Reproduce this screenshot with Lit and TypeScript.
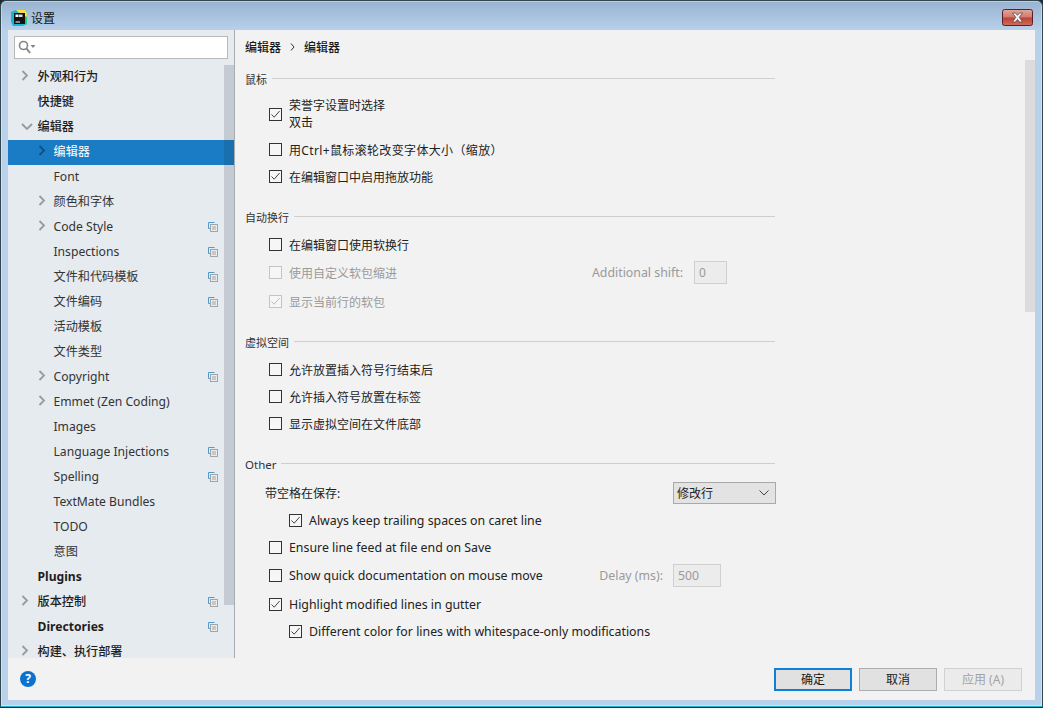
import { LitElement, html, css, svg, nothing } from "lit";
import { customElement } from "lit/decorators.js";

type Node = { t: string; lv: 0 | 1; chev?: "r" | "d"; copy?: boolean; sel?: boolean };
const tree: Node[] = [
  { t: "外观和行为", lv: 0, chev: "r" },
  { t: "快捷键", lv: 0 },
  { t: "编辑器", lv: 0, chev: "d" },
  { t: "编辑器", lv: 1, chev: "r", sel: true },
  { t: "Font", lv: 1 },
  { t: "颜色和字体", lv: 1, chev: "r" },
  { t: "Code Style", lv: 1, chev: "r", copy: true },
  { t: "Inspections", lv: 1, copy: true },
  { t: "文件和代码模板", lv: 1, copy: true },
  { t: "文件编码", lv: 1, copy: true },
  { t: "活动模板", lv: 1 },
  { t: "文件类型", lv: 1 },
  { t: "Copyright", lv: 1, chev: "r", copy: true },
  { t: "Emmet (Zen Coding)", lv: 1, chev: "r" },
  { t: "Images", lv: 1 },
  { t: "Language Injections", lv: 1, copy: true },
  { t: "Spelling", lv: 1, copy: true },
  { t: "TextMate Bundles", lv: 1 },
  { t: "TODO", lv: 1 },
  { t: "意图", lv: 1 },
  { t: "Plugins", lv: 0 },
  { t: "版本控制", lv: 0, chev: "r", copy: true },
  { t: "Directories", lv: 0, copy: true },
  { t: "构建、执行部署", lv: 0, chev: "r" },
];

const chevR = svg`<path d="M1.5 1 L6 5.5 L1.5 10" fill="none" stroke-width="1.8"/>`;
const chevD = svg`<path d="M1 2 L6 7 L11 2" fill="none" stroke-width="1.8"/>`;

@customElement("app-root")
export class AppRoot extends LitElement {
  static styles = css`
    :host {
      display: block; width: 1043px; height: 708px; overflow: hidden;
      font-family: "Noto Sans", "Noto Sans CJK SC", sans-serif; font-size: 12px; color: #1e1e1e;
      background: #1c2b33;
    }
    * { box-sizing: border-box; }
    .win {
      width: 1043px; height: 707px; border: 1px solid #33474f; border-bottom-color: #17b6c9; border-radius: 6px 6px 0 0;
      background: linear-gradient(#98b3d1 0, #b9d1ea 30px); display: flex; flex-direction: column; overflow: hidden;
      box-shadow: inset 0 0 0 1px rgba(255,255,255,.35);
    }
    .title { height: 29px; flex: none; display: flex; align-items: center; padding: 4px 9px 0 9px; gap: 3px; color: #111; font-size: 12px; }
    .title .name { flex: 1; }
    .close { width: 31px; height: 17px; display: block; }
    .client { width: 1027px; margin-left: 7px; height: 670px; flex: none; display: flex; flex-direction: column; background: #f2f2f2; position: relative; }
    .body { flex: 1; display: flex; min-height: 0; }
    .side { width: 227px; flex: none; background: #e6ebf0; border-right: 1px solid #a8acb0; display: flex; flex-direction: column; position: relative; overflow: hidden; }
    .search { margin: 6px; width: 214px; height: 23px; flex: none; background: #fff; border: 1px solid #b9b9b9; display: flex; align-items: center; padding-left: 3px; }
    .tree { flex: 1; overflow: hidden; font-size: 12.15px; }
    .row { height: 25px; padding-bottom: 4px; display: flex; align-items: center; position: relative; white-space: nowrap; color: #262626; }
    .row.en { padding-bottom: 3px; }
    .row.lv0 { padding-left: 29.5px; font-weight: 500; color: #1e1e1e; }
    .row.lv0.en { font-weight: 700; }
    .row.lv1 { padding-left: 45.5px; color: #333; }
    .row.sel { background: #1a7cc4; color: #fff; }
    .chev { position: absolute; top: 5px; stroke: #9a9a9a; }
    .lv0 .chev { left: 13px; width: 8px; height: 12px; }
    .lv1 .chev { left: 30px; width: 8px; height: 12px; }
    .chev.d { left: 13px; width: 12px; height: 10px; top: 7px; }
    .sel .chev { stroke: #0d4f85; }
    .copy { position: absolute; left: 200px; top: 7px; }
    .thumb { position: absolute; left: 216px; top: 35px; width: 10px; height: 540px; background: rgba(30, 50, 70, .17); }
    .main { flex: 1; position: relative; padding: 0 0 0 10px; overflow: hidden; min-width: 0; }
    .vbar { position: absolute; right: 0; top: 30px; width: 10px; height: 252px; background: #dcdcdc; }
    .crumb { height: 35px; padding-bottom: 2px; display: flex; align-items: center; font-weight: 500; font-size: 12px; color: #1a1a1a; gap: 8px; margin-bottom: 5px; }
    .crumb svg { margin: 0 1px; }
    .sec { display: flex; align-items: center; height: 18px; font-size: 11px; color: #333; gap: 5px; width: 530px; }
    .sec i { flex: 1; border-top: 1px solid #cfcfcf; margin-bottom: 2px; }
    .sec.en { font-size: 11.5px; }
    .r { display: flex; align-items: center; width: 530px; padding-left: 24px; gap: 7px; white-space: nowrap; font-size: 12px; height: 27px; color: #222; }
    .r.en { font-size: 12.35px; }
    .r.wide { letter-spacing: .35px; }
    .r.ind { padding-left: 44px; }
    .r.off { color: #9a9a9a; }
    .r.two { height: 36px; margin-top: 8px; margin-bottom: 4px; }
    .r.two .lbl { line-height: 17px; }
    .m1 { margin-top: 1px; }
    .m2 { margin-top: 2px; }
    .cb { width: 13px; height: 13px; flex: none; border: 1px solid #333; background: #f6f6f6; display: block; }
    .off .cb { border-color: #c4c4c4; }
    .grow { flex: 1; }
    .inp { height: 23px; border: 1px solid #d0d0d0; background: #ececec; color: #9a9a9a; display: flex; align-items: center; padding-left: 4px; }
    .shift-label { font-size: 12.35px; margin-right: 4px; }
    .shift { width: 33px; margin-right: 48px; }
    .delay-label { font-size: 12.35px; color: #9a9a9a; margin-right: 3px; }
    .delay { width: 48px; margin-right: 54px; }
    .g1 { margin-top: 5px; }
    .g2 { margin-top: 18px; }
    .trail { padding-left: 20px; margin-top: 6px; }
    .sel-box { width: 103px; height: 22px; border: 1px solid #a9a9a9; background: #e3e3e3; display: flex; align-items: center; justify-content: space-between; padding: 0 6px 0 3px; margin-right: -1px; }
    .foot { height: 42px; flex: none; display: flex; align-items: center; padding: 0 13px 0 12px; gap: 7px; background: #f2f2f2; }
    .help { width: 16px; height: 16px; margin-top: -1px; border-radius: 50%; background: #0c72cf; color: #fff; font-weight: 700; font-size: 12px; display: flex; align-items: center; justify-content: center; margin-right: auto; }
    .btn { width: 78px; height: 23px; border: 1px solid #adadad; background: #e1e1e1; display: flex; align-items: center; justify-content: center; font-size: 12px; color: #1a1a1a; }
    .btn.pri { border: 2px solid #0f80d7; }
    .btn.dis { border-color: #d1d1d1; background: #ebebeb; color: #a3a3a3; }
  `;

  private cb(on: boolean, off = false) {
    const c = off ? "#bdbdbd" : "#444";
    return html`<svg class="cb" viewBox="0 0 11 11">${on ? svg`<path d="M1.5 5.5 L4.2 8.2 L9.6 2" fill="none" stroke=${c} stroke-width="1"/>` : nothing}</svg>`;
  }

  private row(label: unknown, on: boolean, cls = "", rest: unknown = nothing) {
    const off = cls.includes("off");
    return html`<div class="r ${cls}">${this.cb(on, off)}<span class="lbl">${label}</span>${rest}</div>`;
  }

  private logo() {
    return html`<svg width="18" height="18" viewBox="0 0 18 18">
      <path d="M1 3 L6 1 L15 1 L17 4 L17 15 L12 17 L3 17 L1 13 Z" fill="#14b5d6"/>
      <path d="M6 1 L15 1 L17 4 L17 8 L10 5 Z" fill="#f4e04a"/>
      <path d="M13 9 L17 8 L17 15 L13 17 Z" fill="#27c98b"/>
      <rect x="4" y="4" width="11" height="11" fill="#111"/>
      <rect x="5.5" y="5.5" width="3" height="2.5" fill="#fff"/><rect x="9" y="5.5" width="3.5" height="2.5" fill="#ddd"/>
      <rect x="5.5" y="12.5" width="4.5" height="1" fill="#fff"/>
    </svg>`;
  }

  private closeBtn() {
    return html`<svg class="close" viewBox="0 0 31 17">
      <defs><linearGradient id="cg" x1="0" y1="0" x2="0" y2="1">
        <stop offset="0" stop-color="#e2a79c"/><stop offset=".48" stop-color="#d07a6c"/><stop offset=".52" stop-color="#bc4034"/><stop offset="1" stop-color="#cf6f5f"/>
      </linearGradient></defs>
      <rect x=".5" y=".5" width="30" height="16" rx="2" fill="url(#cg)" stroke="#5a1e2c"/>
      <path d="M10.5 4 L13.5 4 L15.5 6.3 L17.5 4 L20.5 4 L17.3 8.3 L20.5 13 L17.5 13 L15.5 10.5 L13.5 13 L10.5 13 L13.7 8.3 Z" fill="#f2f2f2" stroke="#5b4a4c" stroke-width=".8"/>
    </svg>`;
  }

  private copyIcon() {
    return html`<svg class="copy" width="10" height="10" viewBox="0 0 10 10">
      <path d="M6.5 .5 H.5 V6.5 H2" fill="none" stroke="#4c9bcf"/>
      <rect x="2.5" y="2.5" width="7" height="7" fill="none" stroke="#a4a4a4"/>
      <path d="M4 5 H8 M4 7 H8" stroke="#a4a4a4"/>
    </svg>`;
  }

  render() {
    return html`<div class="win">
      <div class="title">${this.logo()}<span class="name">设置</span>${this.closeBtn()}</div>
      <div class="client">
        <div class="body">
          <div class="side">
            <div class="search">
              <svg width="20" height="15" viewBox="0 0 20 15">
                <circle cx="5.5" cy="5.5" r="4" fill="none" stroke="#858585" stroke-width="1.6"/>
                <path d="M8.5 8.5 L12 13" stroke="#858585" stroke-width="2"/>
                <path d="M12.5 5 H17.5 L15 8 Z" fill="#858585"/>
              </svg>
            </div>
            <div class="tree">
              ${tree.map(
                (n) => html`<div class="row lv${n.lv} ${n.sel ? "sel" : ""} ${/[a-z]/i.test(n.t) ? "en" : ""}">
                  ${n.chev === "r" ? html`<svg class="chev" viewBox="0 0 8 12">${chevR}</svg>` : nothing}
                  ${n.chev === "d" ? html`<svg class="chev d" viewBox="0 0 12 10">${chevD}</svg>` : nothing}
                  <span>${n.t}</span>
                  ${n.copy ? this.copyIcon() : nothing}
                </div>`
              )}
            </div>
            <div class="thumb"></div>
          </div>
          <div class="main">
            <div class="crumb"><span>编辑器</span><svg width="5" height="8" viewBox="0 0 5 8"><path d="M1 .5 L4 4 L1 7.5" fill="none" stroke="#333"/></svg><span>编辑器</span></div>
            <div class="sec"><span>鼠标</span><i></i></div>
            ${this.row(html`荣誉字设置时选择<br />双击`, true, "two")}
            ${this.row("用Ctrl+鼠标滚轮改变字体大小（缩放）", false, "wide")}
            ${this.row("在编辑窗口中启用拖放功能", true)}
            <div class="sec g2"><span>自动换行</span><i></i></div>
            ${this.row("在编辑窗口使用软换行", false, "g1")}
            ${this.row("使用自定义软包缩进", false, "off m1", html`<span class="grow"></span><span class="shift-label">Additional shift:</span><span class="inp shift">0</span>`)}
            ${this.row("显示当前行的软包", true, "off m2")}
            <div class="sec g2"><span>虚拟空间</span><i></i></div>
            ${this.row("允许放置插入符号行结束后", false, "g1")}
            ${this.row("允许插入符号放置在标签", false)}
            ${this.row("显示虚拟空间在文件底部", false)}
            <div class="sec g2 en"><span>Other</span><i></i></div>
            <div class="r trail"><span>带空格在保存:</span><span class="grow"></span><span class="sel-box"><span>修改行</span><svg width="10" height="6" viewBox="0 0 10 6"><path d="M.5 .5 L5 5 L9.5 .5" fill="none" stroke="#444"/></svg></span></div>
            ${this.row("Always keep trailing spaces on caret line", true, "ind en m1")}
            ${this.row("Ensure line feed at file end on Save", false, "en")}
            ${this.row("Show quick documentation on mouse move", false, "en m1", html`<span class="grow"></span><span class="delay-label">Delay (ms):</span><span class="inp delay">500</span>`)}
            ${this.row("Highlight modified lines in gutter", true, "en m2")}
            ${this.row("Different color for lines with whitespace-only modifications", true, "ind en")}
            <div class="vbar"></div>
          </div>
        </div>
        <div class="foot">
          <div class="help">?</div>
          <div class="btn pri">确定</div>
          <div class="btn">取消</div>
          <div class="btn dis">应用 (A)</div>
        </div>
      </div>
    </div>`;
  }
}
